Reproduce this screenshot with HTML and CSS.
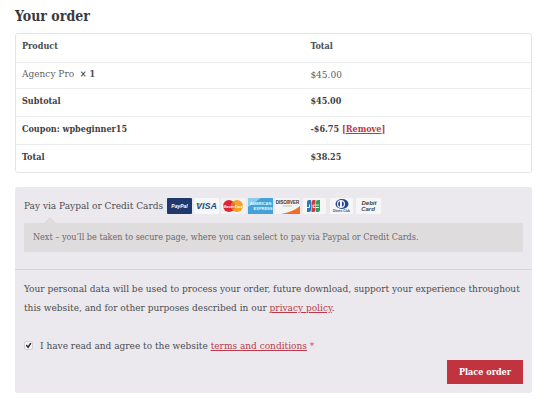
FILE: index.html
```html
<!DOCTYPE html>
<html lang="en">
<head>
    <meta charset="UTF-8">
    <meta name="viewport" content="width=device-width, initial-scale=1.0">
    <title>Checkout</title>
    <link rel="stylesheet" href="styles.css">
</head>
<body>
    <h2 class="order-title">Your order</h2>

    <table class="order-table">
        <thead>
            <tr>
                <th>Product</th>
                <th>Total</th>
            </tr>
        </thead>
        <tbody>
            <tr class="cart-item">
                <td>Agency Pro&nbsp; <strong class="quantity">× 1</strong></td>
                <td>$45.00</td>
            </tr>
        </tbody>
        <tfoot>
            <tr>
                <th>Subtotal</th>
                <td>$45.00</td>
            </tr>
            <tr class="coupon">
                <th>Coupon: wpbeginner15</th>
                <td>-$6.75 <a href="#" class="remove">[<span>Remove</span>]</a></td>
            </tr>
            <tr>
                <th>Total</th>
                <td>$38.25</td>
            </tr>
        </tfoot>
    </table>

    <form class="payment">
        <div class="payment-method">
            <div class="method-label">
                <span>Pay via Paypal or Credit Cards</span>
                <div class="cards">
                    <svg class="card" viewBox="0 0 25 16" role="img" aria-label="PayPal">
                        <rect width="25" height="16" rx="1" fill="#20386b"/>
                        <text x="12.5" y="10" class="logo" font-size="5" font-style="italic" fill="#fff">PayPal</text>
                    </svg>
                    <svg class="card" viewBox="0 0 25 16" role="img" aria-label="Visa">
                        <rect width="25" height="16" rx="1" fill="#f5f7f9"/>
                        <path d="M2 5h4l1 3z" fill="#e8b04a"/>
                        <text x="12.5" y="11" class="logo" font-size="9" font-style="italic" fill="#1c4f86">VISA</text>
                    </svg>
                    <svg class="card" viewBox="0 0 25 16" role="img" aria-label="MasterCard">
                        <rect width="25" height="16" rx="1" fill="#f3f2f3"/>
                        <circle cx="8" cy="8" r="6" fill="#dd2630"/>
                        <circle cx="16" cy="8" r="6" fill="#f6a024"/>
                        <path d="M12 3.5a6 6 0 0 1 0 9a6 6 0 0 1 0-9z" fill="#ee6a29"/>
                        <text x="12" y="9.5" class="logo" font-size="3.5" font-style="italic" fill="#fff">MasterCard</text>
                    </svg>
                    <svg class="card" viewBox="0 0 25 16" role="img" aria-label="American Express">
                        <rect width="25" height="16" fill="#42a3d6"/>
                        <path d="M0 0h13L0 9z" fill="#8bcbea"/>
                        <text x="12.5" y="7" class="logo" font-size="4" fill="#e9f7fd">AMERICAN</text>
                        <text x="15" y="12" class="logo" font-size="4" fill="#e9f7fd">EXPRESS</text>
                    </svg>
                    <svg class="card" viewBox="0 0 25 16" role="img" aria-label="Discover">
                        <rect width="25" height="16" rx="1" fill="#f5f4f4"/>
                        <path d="M25 8v8H6q12-2 19-8z" fill="#ef7026"/>
                        <text x="12.5" y="6" class="logo" font-size="4.5" fill="#33302f">DISCOVER</text>
                        <circle cx="12.5" cy="4.3" r="1.8" fill="#e8762c"/>
                        <path d="M8 8h9" stroke="#aaa" stroke-width=".7"/>
                    </svg>
                    <svg class="card" viewBox="0 0 25 16" role="img" aria-label="JCB">
                        <rect x="1" width="23" height="16" rx="1" fill="#f6f6f6"/>
                        <path d="M7 2h2v10q0 2-2 2H5V4q0-2 2-2z" fill="#2879b8"/>
                        <path d="M11.500 2h2v10q0 2-2 2h-2V4q0-2 2-2z" fill="#d93643"/>
                        <path d="M16 2h2v10q0 2-2 2h-2V4q0-2 2-2z" fill="#2e9d57"/>
                        <path d="M5 9.500h2.500V6.500M13.500 7h-2.500v2.500h2.500M14 7h3M14 9.500h3" stroke="#fff" stroke-width=".9" fill="none"/>
                    </svg>
                    <svg class="card" viewBox="0 0 25 16" role="img" aria-label="Diners Club">
                        <rect x="1" width="23" height="16" rx="1" fill="#f6f6f7"/>
                        <ellipse cx="13" cy="6" rx="6.500" ry="5" fill="#25458f"/>
                        <circle cx="12" cy="6" r="4" fill="#f3f5fb"/>
                        <path d="M11 3.200a3 3 0 0 0 0 5.600zM13 3.200a3 3 0 0 1 0 5.600z" fill="#25458f"/>
                        <text x="12.500" y="14" class="logo" font-size="3" fill="#25458f">Diners Club</text>
                    </svg>
                    <svg class="card" viewBox="0 0 25 16" role="img" aria-label="Debit Card">
                        <rect width="25" height="16" rx="1" fill="#f6f6f6"/>
                        <text x="13" y="7" class="logo" font-size="6" font-style="italic" fill="#444">Debit</text>
                        <text x="12" y="13" class="logo" font-size="6" font-style="italic" fill="#444">Card</text>
                    </svg>
                </div>
            </div>
            <div class="payment-box">Next – you’ll be taken to secure page, where you can select to pay via Paypal or Credit Cards.</div>
        </div>

        <div class="place-order">
            <p class="privacy">Your personal data will be used to process your order, future download, support your experience throughout this website, and for other purposes described in our <a href="#">privacy policy</a>.</p>
            <div class="terms">
                <input type="checkbox" id="terms" class="terms-check" checked>
                <label for="terms">I have read and agree to the website <a href="#">terms and conditions</a> <span class="required">*</span></label>
            </div>
            <button type="button" class="button">Place order</button>
        </div>
    </form>
</body>
</html>
```
FILE: styles.css
```css
* {
    box-sizing: border-box;
}

body {
    margin: 0;
    padding: 6px 18px 6px 15px;
    background: #fff;
    color: #4c4c50;
    font-family: "DejaVu Serif Condensed", "DejaVu Serif", serif;
    font-size: 10px;
    line-height: 19px;
}

a {
    color: #b93a4a;
}

.order-title {
    margin: 0 0 7px;
    color: #3a3a3d;
    font-size: 14px;
    line-height: 20px;
}

.order-table {
    width: 100%;
    margin-bottom: 14px;
    border: 1px solid #e4e4e6;
    border-radius: 3px;
    border-spacing: 0;
    table-layout: fixed;
}

.order-table th,
.order-table td {
    height: 28px;
    padding: 0 6px 3px;
    text-align: left;
}

.order-table th {
    font-size: 9px;
}

.order-table th:first-child,
.order-table td:first-child {
    width: 56%;
}

.order-table tbody td,
.order-table tfoot th,
.order-table tfoot td {
    border-top: 1px solid #ececee;
}

.order-table .cart-item td {
    height: 26px;
    color: #5f5f63;
}

.order-table tfoot th,
.order-table tfoot td {
    color: #3f3f43;
    font-size: 9px;
    font-weight: bold;
}

.quantity {
    color: #4c4c50;
    font-size: 9px;
}

.remove {
    text-decoration: none;
}

.remove span {
    text-decoration: underline;
}

.payment {
    background: #ebe9ed;
    border-radius: 3px;
}

.payment-method {
    padding: 9px 9px 17px;
    border-bottom: 1px solid #d6d4d9;
}

.method-label {
    display: flex;
    align-items: center;
    gap: 4px;
}

.cards {
    display: flex;
    gap: 2px;
}

.card {
    display: block;
    width: 25px;
    height: 16px;
}

.logo {
    font-family: "Liberation Sans", Arial, sans-serif;
    font-weight: bold;
    text-anchor: middle;
}

.payment-box {
    position: relative;
    margin-top: 8px;
    padding: 5px 9px;
    background: #dfdcde;
    border-radius: 1px;
    color: #6a686c;
    font-size: 9px;
}

/* little arrow pointing at the method name */
.payment-box::before {
    content: "";
    position: absolute;
    top: -6px;
    left: 20px;
    border: 6px solid transparent;
    border-top: 0;
    border-bottom-color: #dfdcde;
}

.place-order {
    display: flex;
    flex-direction: column;
    padding: 9px;
}

.privacy {
    margin: 0 0 19px;
}

.terms {
    display: flex;
    align-items: center;
    gap: 7px;
    margin-bottom: 5px;
}

.terms-check {
    display: grid;
    place-items: center;
    width: 9px;
    height: 9px;
    margin: 0;
    appearance: none;
    background: #f6f6f8;
    border: 1px solid #d3d1d6;
    border-radius: 2px;
}

.terms-check:checked::before {
    content: "";
    width: 6px;
    height: 6px;
    background: #333;
    clip-path: polygon(0 50%, 20% 35%, 40% 60%, 80% 0, 100% 15%, 45% 100%);
}

.required {
    color: #e2504f;
}

.button {
    align-self: flex-end;
    padding: 0 12px;
    border: 0;
    background: #c1343f;
    color: #fff;
    font-family: inherit;
    font-size: 9px;
    font-weight: bold;
    line-height: 24px;
    cursor: pointer;
}

.button:hover {
    background: #a52b35;
}
```
